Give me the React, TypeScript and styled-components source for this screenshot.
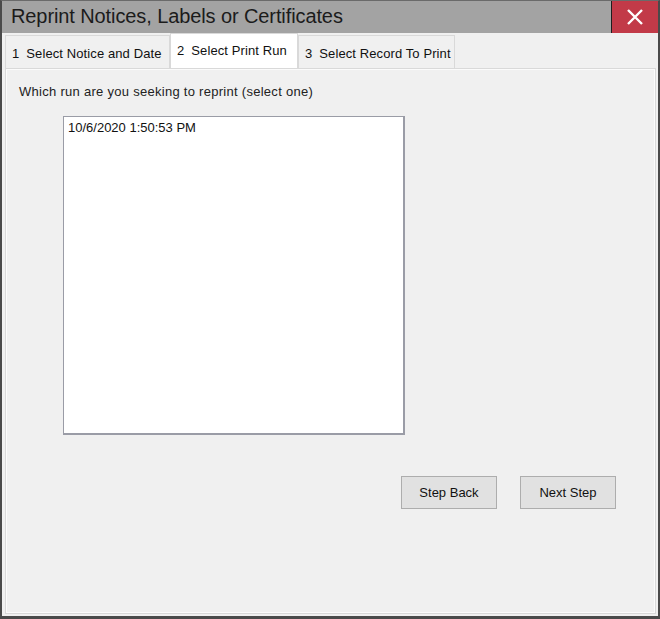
import React from "react";
import styled, { createGlobalStyle } from "styled-components";

const Global = createGlobalStyle`
  html, body { margin: 0; padding: 0; background: #f0f0f0; }
  body { font-family: "Liberation Sans", Arial, sans-serif; }
  * { box-sizing: border-box; }
`;

const Window = styled.div`
  width: 660px;
  height: 619px;
  display: flex;
  flex-direction: column;
  background: #f0f0f0;
  border-left: 2px solid #4a4a4a;
  border-right: 2px solid #4a4a4a;
  border-bottom: 3px solid #4a4a4a;
  border-top: 1px solid #6a6a6a;
`;

const TitleBar = styled.div`
  height: 32px;
  display: flex;
  align-items: center;
  background: #a3a3a3;
  flex-shrink: 0;
`;

const Title = styled.div`
  flex: 1;
  padding-left: 9px;
  font-family: "Liberation Sans", Arial, sans-serif;
  font-size: 20px;
  color: #1b1b1b;
  letter-spacing: -0.1px;
  padding-bottom: 2px;
`;

const CloseButton = styled.div`
  width: 47px;
  height: 32px;
  background: #c23a48;
  border-left: 1px solid #1e1e1e;
  display: flex;
  align-items: center;
  justify-content: center;
`;

const TabStrip = styled.div`
  display: flex;
  align-items: flex-end;
  height: 35px;
  padding-left: 3px;
  flex-shrink: 0;
`;

const Tab = styled.div<{ $active?: boolean; $w: number }>`
  width: ${(p) => p.$w}px;
  height: ${(p) => (p.$active ? 35 : 33)}px;
  background: ${(p) => (p.$active ? "#ffffff" : "#f0f0f0")};
  border: 1px solid #d9d9d9;
  border-bottom: none;
  display: flex;
  align-items: ${(p) => (p.$active ? "flex-start" : "center")};
  padding-top: ${(p) => (p.$active ? "9px" : "3px")};
  padding-left: 6px;
  font-size: 13px;
  letter-spacing: 0.1px;
  color: #111;
  white-space: nowrap;
`;

const TabNum = styled.span`
  margin-right: 7px;
`;

const Panel = styled.div`
  flex: 1;
  margin: 0 2px 2px 3px;
  border: 1px solid #d9d9d9;
  background: #f0f0f0;
  box-shadow: inset 0 0 0 1px #fbfbfb;
  padding: 16px 0 0 13px;
  display: flex;
  flex-direction: column;
`;

const Prompt = styled.div`
  font-size: 13px;
  letter-spacing: 0.28px;
  color: #222;
  height: 14px;
  line-height: 14px;
`;

const ListBox = styled.div`
  margin-top: 17px;
  margin-left: 44px;
  width: 342px;
  height: 319px;
  background: #ffffff;
  border: 1px solid #9a9ca6;
  border-right: 2px solid #9a9ca6;
  border-bottom: 2px solid #9a9ca6;
  padding: 3px 0 0 4px;
`;

const ListItem = styled.div`
  font-size: 13px;
  color: #111;
  line-height: 15px;
`;

const ButtonRow = styled.div`
  display: flex;
  gap: 23px;
  margin-top: 41px;
  margin-left: 382px;
`;

const Button = styled.div`
  width: 96px;
  height: 33px;
  background: #e1e1e1;
  border: 1px solid #adadad;
  display: flex;
  align-items: center;
  justify-content: center;
  font-size: 13px;
  color: #111;
  padding-bottom: 1px;
`;

export default function App() {
  return (
    <>
      <Global />
      <Window>
        <TitleBar>
          <Title>Reprint Notices, Labels or Certificates</Title>
          <CloseButton>
            <svg width="18" height="18" viewBox="0 0 18 18">
              <path d="M2 2 L16 16 M16 2 L2 16" stroke="#ffffff" strokeWidth="2.4" />
            </svg>
          </CloseButton>
        </TitleBar>
        <TabStrip>
          <Tab $w={165}>
            <TabNum>1</TabNum>Select Notice and Date
          </Tab>
          <Tab $w={128} $active>
            <TabNum>2</TabNum>Select Print Run
          </Tab>
          <Tab $w={157}>
            <TabNum>3</TabNum>Select Record To Print
          </Tab>
        </TabStrip>
        <Panel>
          <Prompt>Which run are you seeking to reprint (select one)</Prompt>
          <ListBox>
            <ListItem>10/6/2020 1:50:53 PM</ListItem>
          </ListBox>
          <ButtonRow>
            <Button>Step Back</Button>
            <Button>Next Step</Button>
          </ButtonRow>
        </Panel>
      </Window>
    </>
  );
}
